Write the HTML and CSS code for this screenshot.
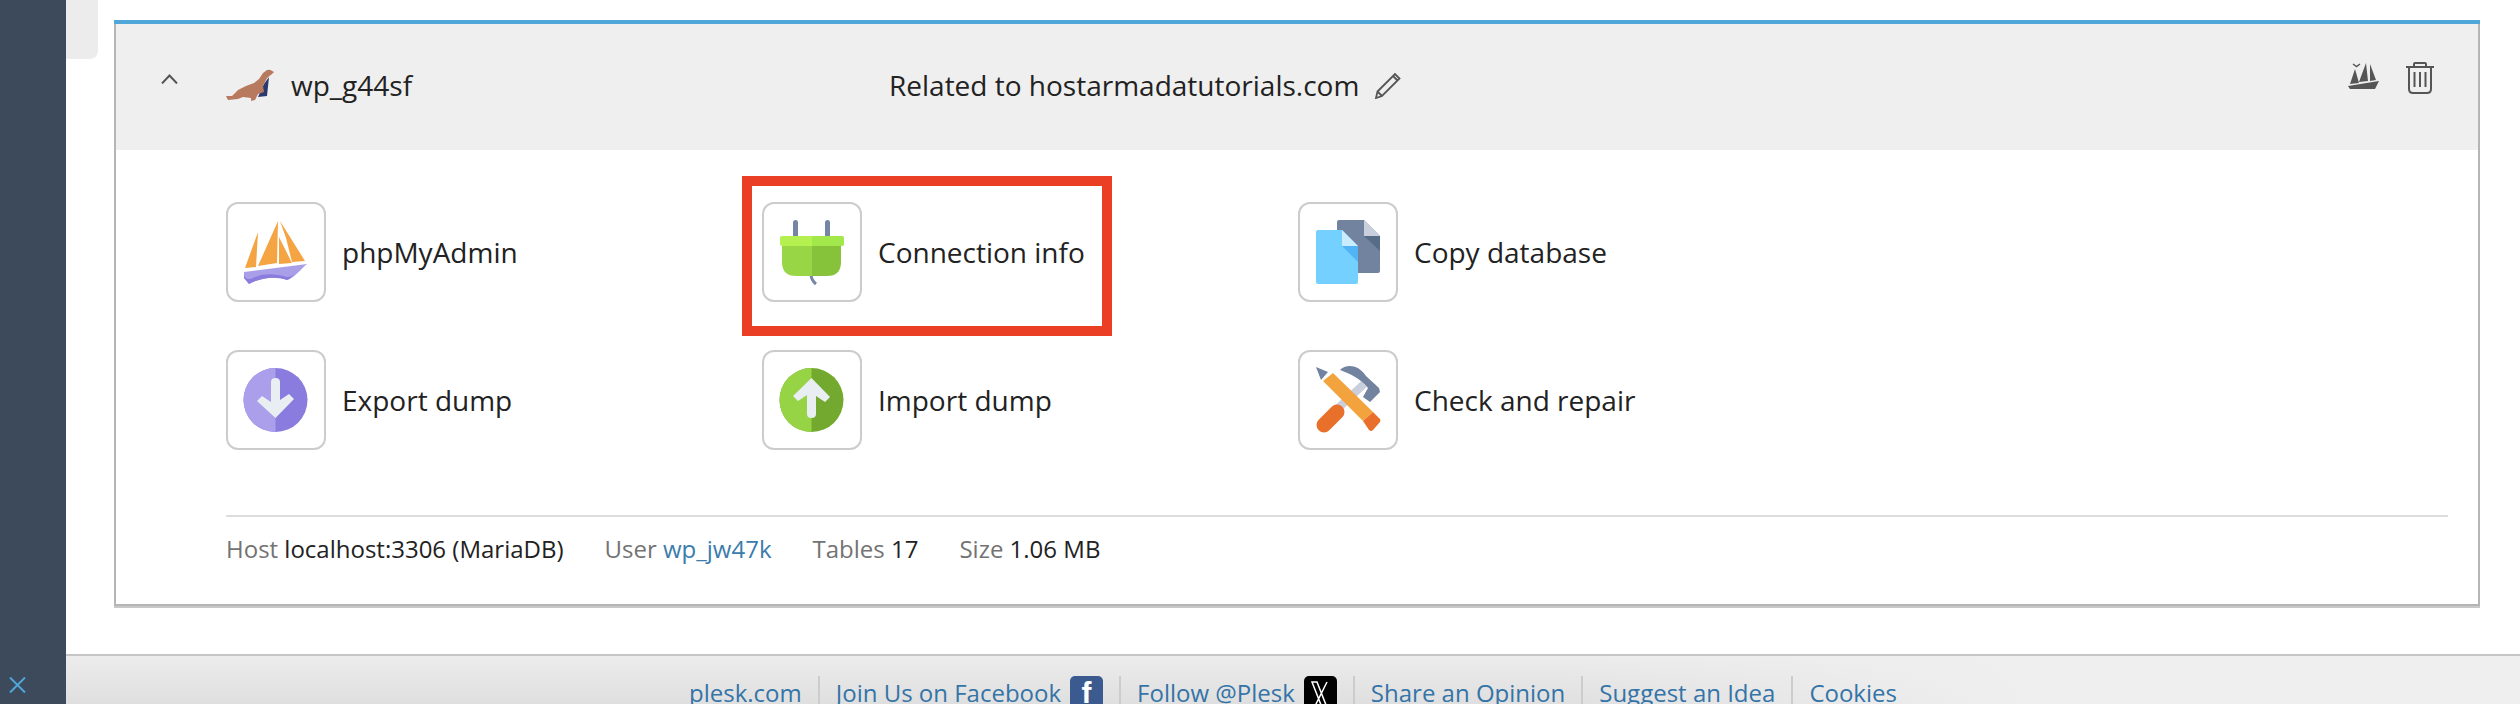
FILE: index.html
```html
<!DOCTYPE html>
<html>
<head>
  <title>Databases</title>
  <link rel="stylesheet" href="styles.css">
</head>
<body>
  <div class="page">
    <div class="sidebar">
      <svg class="sidebar-close" viewBox="0 0 17 16" width="17" height="16"><path d="M1 0.5 16 15.5M16 0.5 1 15.5" stroke="#4fa6d9" stroke-width="2" fill="none"/></svg>
    </div>
    <div class="main">
      <div class="content">
        <div class="side-tab"></div>
        <div class="card">
          <div class="card-inner">
            <div class="card-head">
              <div class="toggle">
                <svg viewBox="0 0 17 10" width="17" height="10"><path d="M1 9.5 8.5 1.5 16 9.5" stroke="#555" stroke-width="2" fill="none"/></svg>
              </div>
              <div class="db-name">
                <svg class="seal" viewBox="0 0 48 32" width="48" height="32">
                  <path d="M32 28 38 15 43 8 41 27Z" fill="#2a3a70"/>
                  <path d="M48 3 44 .8 41 1 37 4 33 10 28 14 20 17 12 21 6 27 0 27 2 31 12 30 17 28 25 29 25 32 29 31 32 25 38 23 37 17 41 9 46 5Z" fill="#b87a5f"/>
                </svg>
                <span>wp_g44sf</span>
              </div>
              <div class="related">
                <span>Related to hostarmadatutorials.com</span>
                <svg class="edit-icon" viewBox="0 0 28 28" width="28" height="28"><path d="M2.5 20.5 20 3l4.5 4.500L7 25l-6 2ZM18 5l4.500 4.500M2.500 20.500 7 25" stroke="#555" stroke-width="1.800" fill="none"/></svg>
              </div>
              <div class="head-actions">
                <svg viewBox="0 0 32 28" width="32" height="28">
                  <path d="M7 7 2 22 11 21ZM18 1 11 20 20 19ZM22 2 22 19 28 18ZM0 24 31 19 27 27 2 27Z" fill="#555"/>
                  <path d="M5 2 8.500 4.500 12 2" stroke="#555" stroke-width="1.500" fill="none"/>
                </svg>
                <svg viewBox="0 0 28 32" width="28" height="32">
                  <path d="M0 5H28M8 5V2Q8 1 9 1H19Q20 1 20 2V5M3 5V27Q3 31 7 31H21Q25 31 25 27V5M8.500 10V25M14 10V25M19.500 10V25" stroke="#555" stroke-width="2" fill="none"/>
                </svg>
              </div>
            </div>
            <div class="card-body">
              <div class="tools">
                <a class="tool">
                  <span class="tool-icon">
                    <svg viewBox="0 0 100 100" width="100" height="100">
                      <path d="M32 30 19 66 30 65ZM52 19 32 64 51 61ZM53 35 53 62 66 61ZM54 19 79 59 66 60 60 36Z" fill="#f4a442"/>
                      <path d="M18 70 81 62C74 68 68 76 61 78 50 74 36 75 23 82L18 76Z" fill="#a99fe8"/>
                      <path d="M18 73C19 78 24 78 29 75 40 71 50 72 61 75 64 75 67 74 70 71 67 74 64 77 61 78 50 74 36 75 23 82L18 76Z" fill="#8a7ddd"/>
                    </svg>
                  </span>
                  <span class="tool-label">phpMyAdmin</span>
                </a>
                <a class="tool">
                  <span class="tool-icon">
                    <svg viewBox="0 0 100 100" width="100" height="100">
                      <rect x="31" y="18" width="5" height="18" rx="2.500" fill="#7486a4"/>
                      <rect x="63" y="18" width="5" height="18" rx="2.500" fill="#7486a4"/>
                      <path d="M49 72Q49 78 54 82" stroke="#7486a4" stroke-width="3" fill="none"/>
                      <path d="M20 44H50V74H34Q20 74 20 60Z" fill="#98d645"/>
                      <path d="M50 44H79V60Q79 74 65 74H50Z" fill="#86c23a"/>
                      <path d="M20 34H50V44H20Q18 44 18 42V36Q18 34 20 34Z" fill="#b4f050"/>
                      <path d="M50 34H80Q82 34 82 36V42Q82 44 80 44H50Z" fill="#a3e84a"/>
                    </svg>
                  </span>
                  <span class="tool-label">Connection info</span>
                </a>
                <a class="tool">
                  <span class="tool-icon">
                    <svg viewBox="0 0 100 100" width="100" height="100">
                      <path d="M41 18H66L82 34V69Q82 71 80 71H41Q39 71 39 69V20Q39 18 41 18Z" fill="#72839f"/>
                      <path d="M66 34H82V49Z" fill="#566c87"/>
                      <path d="M66 18 82 34H66Z" fill="#c9cfdd"/>
                      <path d="M20 28H44L60 44V80Q60 82 58 82H20Q18 82 18 80V30Q18 28 20 28Z" fill="#74d0ff"/>
                      <path d="M44 44H60V60Z" fill="#53b4f5"/>
                      <path d="M44 28 60 44H44Z" fill="#c9ecff"/>
                    </svg>
                  </span>
                  <span class="tool-label">Copy database</span>
                </a>
                <a class="tool">
                  <span class="tool-icon">
                    <svg viewBox="0 0 100 100" width="100" height="100">
                      <circle cx="49.500" cy="50" r="32" fill="#8a7bde"/>
                      <path d="M49.500 18A32 32 0 0 0 49.500 82Z" fill="#ab9fec"/>
                      <path d="M45 32Q45 28 49.500 28 54 28 54 32V50L63 44 68 49 49.500 68 31 51 36 46 45 52Z" fill="#e9eef2"/>
                    </svg>
                  </span>
                  <span class="tool-label">Export dump</span>
                </a>
                <a class="tool">
                  <span class="tool-icon">
                    <svg viewBox="0 0 100 100" width="100" height="100">
                      <circle cx="49.500" cy="50" r="32" fill="#73a92f"/>
                      <path d="M49.500 18A32 32 0 0 0 49.500 82Z" fill="#97d445"/>
                      <path d="M45 64Q45 68 49.500 68 54 68 54 64V46L63 52 68 47 49.500 28 31 46 36 51 45 45Z" fill="#e9eef2"/>
                    </svg>
                  </span>
                  <span class="tool-label">Import dump</span>
                </a>
                <a class="tool">
                  <span class="tool-icon">
                    <svg viewBox="0 0 100 100" width="100" height="100">
                      <path d="M36 62 66 34" stroke="#c9cfdd" stroke-width="8" fill="none"/>
                      <path d="M42 20C48 14 60 14 68 26L81 38 82 42 72 52 65 47 70 38C62 28 52 24 42 20Z" fill="#72839f"/>
                      <path d="M26 75 39 62" stroke="#e8702a" stroke-width="15" stroke-linecap="round" fill="none"/>
                      <path d="M25 31 35 23 75 62 65 71Z" fill="#f2a33e"/>
                      <path d="M65 71 75 62 82 69Q83 71 82 72L75 80Q73 82 71 80Z" fill="#e8702a"/>
                      <path d="M18 17 30 22 23 30Z" fill="#72839f"/>
                    </svg>
                  </span>
                  <span class="tool-label">Check and repair</span>
                </a>
              </div>
              <div class="meta">
                <span class="meta-item">Host <b>localhost:3306 (MariaDB)</b></span>
                <span class="meta-item">User <a>wp_jw47k</a></span>
                <span class="meta-item">Tables <b>17</b></span>
                <span class="meta-item">Size <b>1.06 MB</b></span>
              </div>
              <div class="highlight"></div>
            </div>
          </div>
        </div>
      </div>
      <div class="footer">
        <a class="footer-link">plesk.com</a>
        <a class="footer-link">Join Us on Facebook <span class="social fb">f</span></a>
        <a class="footer-link">Follow @Plesk <span class="social x-logo"><svg viewBox="0 0 32 40" width="32" height="40"><path d="M8 6H13L24 34H19ZM23 6 9 34" stroke="#fff" stroke-width="1.500" fill="none"/></svg></span></a>
        <a class="footer-link">Share an Opinion</a>
        <a class="footer-link">Suggest an Idea</a>
        <a class="footer-link">Cookies</a>
      </div>
    </div>
  </div>
</body>
</html>
```

FILE: styles.css
```css
html, body {
  margin: 0;
  padding: 0;
  height: 100%;
  overflow: hidden;
}

body {
  font-family: "Open Sans", sans-serif;
  color: #222;
  background-color: #fff;
}

.page {
  display: flex;
  height: 704px;
}

.sidebar {
  width: 66px;
  flex-shrink: 0;
  background-color: #3c4a5c;
  display: flex;
  flex-direction: column;
  justify-content: flex-end;
  padding: 0 0 11px 9px;
  box-sizing: border-box;
}

.sidebar-close {
  display: block;
}

.main {
  flex: 1;
  min-width: 0;
  display: flex;
  flex-direction: column;
}

.content {
  display: flex;
  height: 654px;
  flex-shrink: 0;
}

.side-tab {
  width: 32px;
  height: 59px;
  background-color: #ececec;
  border-bottom-right-radius: 8px;
  flex-shrink: 0;
}

.card {
  flex: 1;
  margin: 20px 40px 48px 16px;
  border-top: 4px solid #4fa6d9;
  box-shadow: 0 2px 0 #c8c8c8;
}

.card-inner {
  height: 100%;
  box-sizing: border-box;
  border: 2px solid #b5b5b5;
  border-top: none;
  display: flex;
  flex-direction: column;
}

.card-head {
  height: 126px;
  flex-shrink: 0;
  box-sizing: border-box;
  background-color: #efefef;
  display: flex;
  align-items: flex-start;
  padding-top: 38px;
  font-size: 28px;
}

.toggle {
  width: 110px;
  padding: 11px 0 0 45px;
  box-sizing: border-box;
  flex-shrink: 0;
  line-height: 0;
}

.db-name {
  width: 663px;
  flex-shrink: 0;
  display: flex;
  align-items: center;
  gap: 17px;
  padding-top: 4px;
}

.seal {
  display: block;
}

.related {
  flex: 1;
  display: flex;
  align-items: center;
  gap: 16px;
  padding-top: 4px;
}

.edit-icon {
  display: block;
}

.head-actions {
  display: flex;
  align-items: flex-start;
  gap: 26px;
  padding-right: 44px;
}

.card-body {
  flex: 1;
  position: relative;
  padding: 52px 30px 0 110px;
}

.tools {
  display: grid;
  grid-template-columns: repeat(3, 536px);
  row-gap: 48px;
  padding-bottom: 65px;
  border-bottom: 2px solid #ddd;
}

.tool {
  display: flex;
  align-items: center;
  gap: 16px;
  font-size: 28px;
}

.tool-icon {
  width: 100px;
  height: 100px;
  box-sizing: border-box;
  border: 2px solid #ccc;
  border-radius: 12px;
  background-color: #fff;
  flex-shrink: 0;
}

.tool-icon svg {
  display: block;
  margin: -2px;
}

.meta {
  display: flex;
  gap: 41px;
  padding-top: 15px;
  font-size: 24px;
  color: #737373;
}

.meta b {
  font-weight: 400;
  color: #222;
}

.meta a {
  color: #3a7cab;
}

.highlight {
  position: absolute;
  left: 626px;
  top: 26px;
  width: 370px;
  height: 160px;
  box-sizing: border-box;
  border: 10px solid #ea3f24;
}

.footer {
  flex: 1;
  min-height: 0;
  overflow: hidden;
  border-top: 2px solid #c6c6c6;
  background: linear-gradient(to right, rgba(239, 239, 239, 0) 60%, #efefef 80%), linear-gradient(#ececec, #dfdfdf);
  display: flex;
  justify-content: center;
  padding-top: 20px;
  font-size: 24px;
  box-sizing: border-box;
}

.footer-link {
  display: flex;
  gap: 9px;
  height: 60px;
  padding: 0 16px;
  border-left: 2px solid #ccc;
  color: #3474a7;
  white-space: nowrap;
}

.footer-link:first-child {
  border-left: none;
}

.social {
  display: block;
  width: 33px;
  height: 40px;
  border-radius: 5px 5px 0 0;
  text-align: center;
  color: #fff;
}

.fb {
  background-color: #3b5a8f;
  font-family: "Liberation Sans", sans-serif;
  font-weight: 700;
  font-size: 30px;
}

.x-logo {
  background-color: #000;
  line-height: 0;
}
```
